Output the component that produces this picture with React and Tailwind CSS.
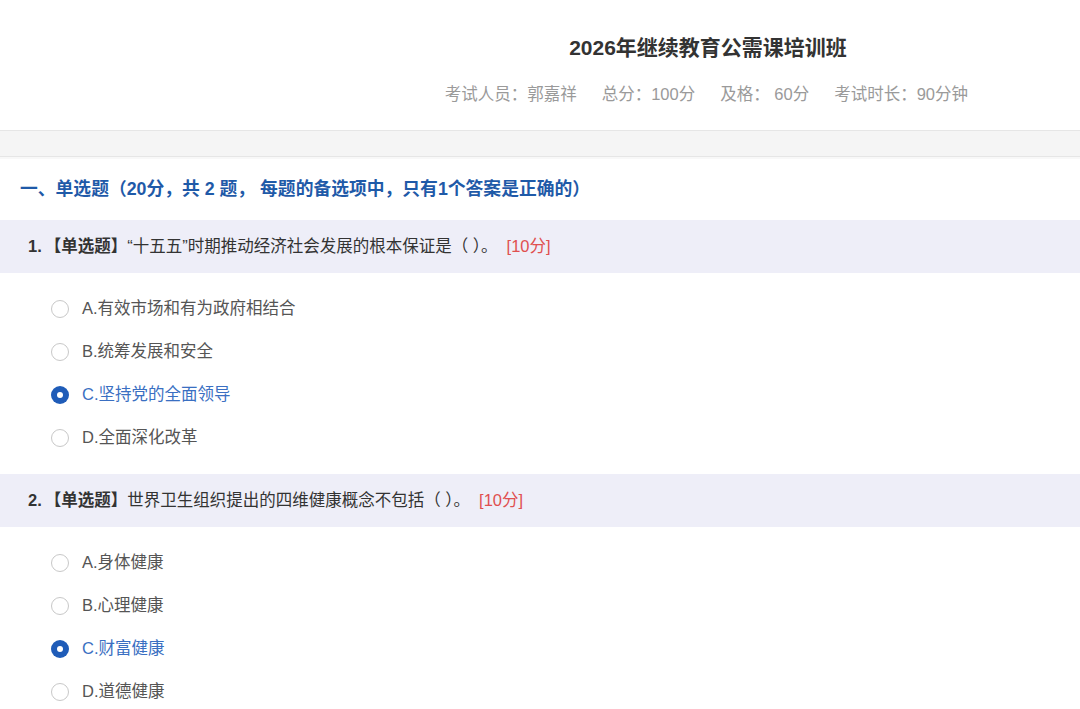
import React from "react";

const FONT = { fontFamily: '"Liberation Sans", "Noto Sans CJK SC", sans-serif' };

const questions = [
  {
    no: "1.",
    text: "“十五五”时期推动经济社会发展的根本保证是（ ）。",
    score: "[10分]",
    options: ["A.有效市场和有为政府相结合", "B.统筹发展和安全", "C.坚持党的全面领导", "D.全面深化改革"],
    picked: 2,
  },
  {
    no: "2.",
    text: "世界卫生组织提出的四维健康概念不包括（ ）。",
    score: "[10分]",
    options: ["A.身体健康", "B.心理健康", "C.财富健康", "D.道德健康"],
    picked: 2,
  },
];

function Radio({ checked }) {
  if (checked) {
    return (
      <span className="flex h-[18px] w-[18px] shrink-0 items-center justify-center rounded-full bg-[#1f5cb8]">
        <span className="h-[6px] w-[6px] rounded-full bg-white" />
      </span>
    );
  }
  return <span className="h-[18px] w-[18px] shrink-0 rounded-full border border-[#c8c8c8] bg-white" />;
}

function Question({ q }) {
  return (
    <div>
      <div className="flex h-[53px] items-center bg-[#eeeef8] pl-[28px] text-[16.5px] text-[#333]">
        <span className="mr-[3px] font-bold">{q.no}</span>
        <span className="font-bold">【单选题】</span>
        <span>{q.text}</span>
        <span className="ml-[9px] text-[#e05050]">{q.score}</span>
      </div>
      <div className="pt-[14px] pb-[15px]">
        {q.options.map((o, i) => (
          <div key={o} className="flex h-[43px] items-center gap-[13px] pl-[51px]">
            <Radio checked={i === q.picked} />
            <span className={"text-[16.5px] " + (i === q.picked ? "text-[#3a6fc2]" : "text-[#555]")}>{o}</span>
          </div>
        ))}
      </div>
    </div>
  );
}

export default function App() {
  return (
    <div className="h-[709px] w-[1080px] overflow-hidden bg-white" style={FONT}>
      <header className="flex h-[130px] flex-col pt-[36px]">
        <div className="flex justify-center pl-[336px]">
          <h1 className="text-[21px] font-bold leading-[24px] text-[#333]">2026年继续教育公需课培训班</h1>
        </div>
        <div className="mt-[22px] flex justify-end gap-[25px] pr-[112px] text-[16.5px] leading-[24px] text-[#9a9a9a]">
          <span>考试人员：郭嘉祥</span>
          <span>总分：100分</span>
          <span>及格： 60分</span>
          <span>考试时长：90分钟</span>
        </div>
      </header>
      <div className="h-[27px] border-y border-[#e6e6e6] bg-[#f5f5f5]" />
      <div className="h-[2px] bg-[#f8f8f8]" />
      <div className="flex h-[61px] items-center pl-[20px] text-[17.8px] font-bold text-[#1f5aa8]">
        一、单选题（20分，共 2 题， 每题的备选项中，只有1个答案是正确的）
      </div>
      {questions.map((q) => (
        <Question key={q.no} q={q} />
      ))}
    </div>
  );
}
